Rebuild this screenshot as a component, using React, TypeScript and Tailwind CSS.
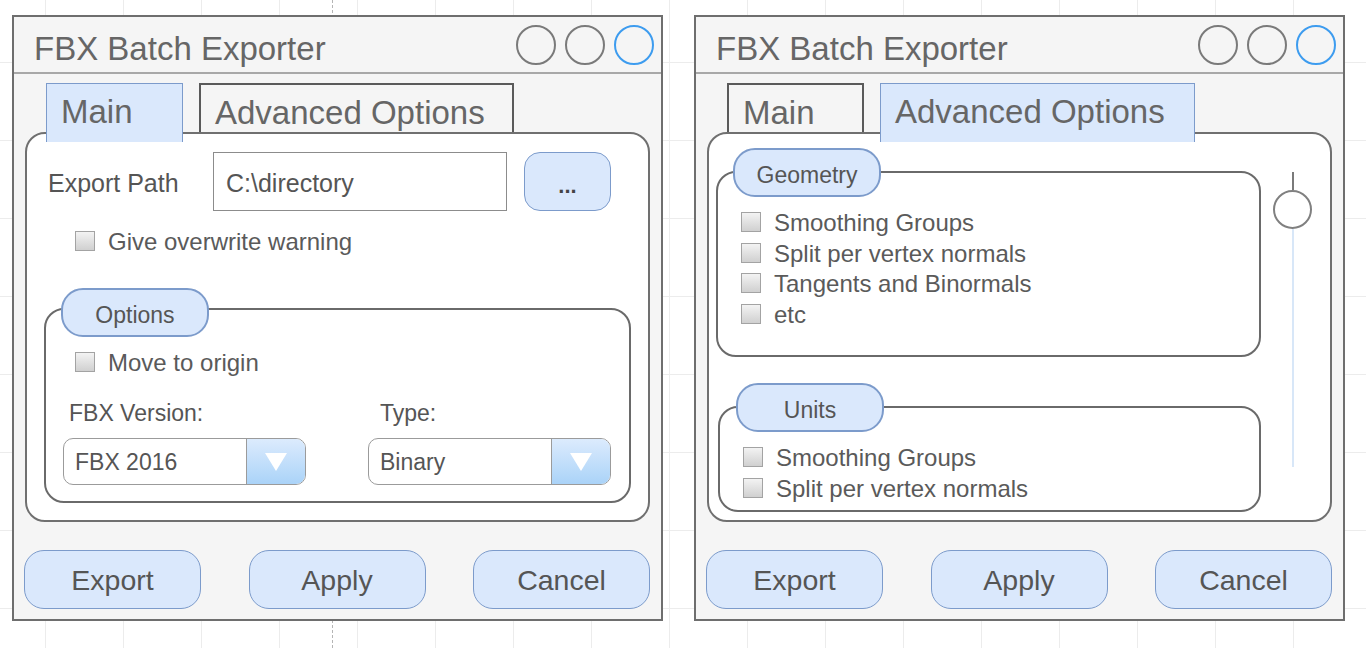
import React from "react";

const FONT = "font-['Liberation_Sans',Arial,sans-serif]";

const Check = ({ label }: { label: string }) => (
  <div className="flex h-[20px] items-center">
    <span className="h-[20px] w-[20px] shrink-0 border border-[#a3a3a3] bg-linear-to-b from-[#f3f3f3] to-[#d0d0d0]" />
    <span className="ml-[13px] whitespace-nowrap pt-[2px] text-[24px] leading-none text-[#5a5a5a]">
      {label}
    </span>
  </div>
);

const Pill = ({
  children,
  className = "",
}: {
  children: React.ReactNode;
  className?: string;
}) => (
  <div
    className={`relative z-10 flex h-[49px] w-[148px] items-center justify-center rounded-[22px] border-2 border-[#7c9bcb] bg-[#dae8fc] pt-[5px] text-[23px] leading-none text-[#555] ${className}`}
  >
    {children}
  </div>
);

const Dropdown = ({ value }: { value: string }) => (
  <div className="flex h-[47px] w-[243px] overflow-hidden rounded-[10px] border border-[#9b9b9b] bg-white">
    <div className="flex flex-1 items-center pl-[11px] pt-[2px] text-[23px] leading-none text-[#555]">
      {value}
    </div>
    <div className="flex w-[59px] items-center justify-center border-l border-[#9b9b9b] bg-linear-to-b from-[#dcebfd] to-[#aad3f8]">
      <svg width="22" height="18" viewBox="0 0 22 18">
        <polygon points="0,0 22,0 11,18" fill="#ffffff" />
      </svg>
    </div>
  </div>
);

const Tab = ({
  label,
  active,
  width,
}: {
  label: string;
  active: boolean;
  width: string;
}) => (
  <div
    className={`${width} whitespace-nowrap pl-[14px] pt-[12px] text-[33px] leading-[32px] text-[#666] ${
      active
        ? "h-[59px] border border-b-0 border-[#7c9bcb] bg-[#dae8fc]"
        : "h-[49px] border-2 border-b-0 border-[#5a5a5a] bg-[#f5f5f5]"
    }`}
  >
    {label}
  </div>
);

const Window = ({
  active,
  children,
  tabOffset,
}: {
  active: "main" | "advanced";
  children: React.ReactNode;
  tabOffset: string;
}) => (
  <div className="relative flex h-[606px] w-[651px] flex-col border-2 border-[#6e6e6e] bg-[#f5f5f5]">
    {/* title bar */}
    <div className="flex h-[57px] items-center justify-between border-b-2 border-[#a8a8a8] pl-[20px] pr-[7px]">
      <span className="pt-[8px] text-[33px] leading-none text-[#666]">
        FBX Batch Exporter
      </span>
      <div className="flex gap-[9px]">
        <span className="h-[40px] w-[40px] rounded-full border-2 border-[#7a7a7a]" />
        <span className="h-[40px] w-[40px] rounded-full border-2 border-[#7a7a7a]" />
        <span className="h-[40px] w-[40px] rounded-full border-2 border-[#3d9cef]" />
      </div>
    </div>

    <div className="flex flex-1 flex-col px-[11px] pt-[9px]">
      {/* tabs */}
      <div className={`relative z-10 flex h-[49px] items-start gap-[16px] ${tabOffset}`}>
        <Tab label="Main" active={active === "main"} width="w-[137px]" />
        <Tab
          label="Advanced Options"
          active={active === "advanced"}
          width="w-[315px]"
        />
      </div>

      {/* content panel */}
      <div className="h-[390px] w-[625px] rounded-[20px] border-2 border-[#707070] bg-white">
        {children}
      </div>

      {/* buttons */}
      <div className="-ml-[1px] mt-[28px] flex w-[626px] justify-between">
        {["Export", "Apply", "Cancel"].map((b) => (
          <div
            key={b}
            className="flex h-[59px] w-[177px] items-center justify-center rounded-[20px] border border-[#7c9bcb] bg-[#dae8fc] pt-[2px] text-[28.5px] leading-none text-[#555]"
          >
            {b}
          </div>
        ))}
      </div>
    </div>
  </div>
);

const MainPanel = () => (
  <div className="flex flex-col">
    <div className="ml-[21px] mt-[18px] flex h-[59px] items-center">
      <div className="w-[165px] pt-[3px] text-[25px] leading-none text-[#555]">
        Export Path
      </div>
      <div className="flex h-full w-[294px] items-center border border-[#8c8c8c] bg-white pl-[12px] pt-[3px] text-[25px] leading-none text-[#555]">
        C:\directory
      </div>
      <div className="ml-[17px] flex h-full w-[87px] items-center justify-center rounded-[16px] border border-[#7c9bcb] bg-[#dae8fc] pt-[8px] text-[22px] font-bold leading-none text-[#444]">
        ...
      </div>
    </div>

    <div className="ml-[48px] mt-[20px]">
      <Check label="Give overwrite warning" />
    </div>

    {/* Options group */}
    <div className="ml-[17px] mt-[37px] w-[587px]">
      <Pill className="ml-[17px]">Options</Pill>
      <div className="-mt-[29px] h-[195px] rounded-[20px] border-2 border-[#6a6a6a] bg-white pt-[42px]">
        <div className="ml-[29px]">
          <Check label="Move to origin" />
        </div>
        <div className="ml-[17px] mt-[30px] grid grid-cols-[243px_243px] gap-x-[62px]">
          <div className="ml-[6px] text-[23px] leading-none text-[#555]">
            FBX Version:
          </div>
          <div className="ml-[12px] text-[23px] leading-none text-[#555]">
            Type:
          </div>
          <div className="mt-[13px]">
            <Dropdown value="FBX 2016" />
          </div>
          <div className="mt-[13px]">
            <Dropdown value="Binary" />
          </div>
        </div>
      </div>
    </div>
  </div>
);

const AdvancedPanel = () => (
  <div className="flex items-start">
    <div className="ml-[7px] mt-[14px] w-[545px]">
      {/* Geometry */}
      <Pill className="ml-[17px]">Geometry</Pill>
      <div className="-mt-[26px] flex h-[186px] flex-col gap-[10.7px] rounded-[20px] border-2 border-[#6a6a6a] bg-white pl-[23px] pt-[39px]">
        <Check label="Smoothing Groups" />
        <Check label="Split per vertex normals" />
        <Check label="Tangents and Binormals" />
        <Check label="etc" />
      </div>

      {/* Units */}
      <div className="ml-[2px] mt-[26px]">
        <Pill className="ml-[18px]">Units</Pill>
        <div className="-mt-[26px] flex h-[106px] flex-col gap-[11px] rounded-[20px] border-2 border-[#6a6a6a] bg-white pl-[23px] pt-[39px]">
          <Check label="Smoothing Groups" />
          <Check label="Split per vertex normals" />
        </div>
      </div>
    </div>

    {/* vertical slider */}
    <div className="ml-[12px] mt-[38px] flex w-[39px] flex-col items-center">
      <span className="h-[18px] w-[2px] bg-[#7a7a7a]" />
      <span className="h-[39px] w-[39px] rounded-full border-2 border-[#808080] bg-white" />
      <span className="h-[238px] w-[2px] bg-[#d8e7f8]" />
    </div>
  </div>
);

export default function App() {
  return (
    <div
      className={`relative flex h-[648px] w-[1366px] gap-[31px] overflow-hidden bg-white bg-[linear-gradient(to_right,#ececec_1px,transparent_1px),linear-gradient(to_bottom,#ececec_1px,transparent_1px)] pl-[12px] pt-[15px] [background-position:45px_62px] [background-size:78px_78px] ${FONT}`}
    >
      {/* page break marker */}
      <div className="absolute left-[332px] top-0 h-full border-l border-dashed border-[#b5b5b5]" />

      <Window active="main" tabOffset="pl-[21px]">
        <MainPanel />
      </Window>
      <Window active="advanced" tabOffset="pl-[20px]">
        <AdvancedPanel />
      </Window>
    </div>
  );
}
